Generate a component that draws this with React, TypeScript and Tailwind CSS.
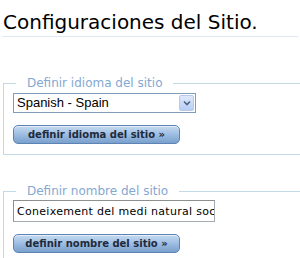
export default function App() {
  return (
    <div className="h-[258px] w-[300px] overflow-hidden bg-white font-['DejaVu_Sans',sans-serif]">
      <h1 className="mx-[2px] mt-[10px] border-b border-[#dfe7f0] pl-[1px] pb-[2px] text-[20px] leading-[24px] text-black">
        Configuraciones del Sitio.
      </h1>

      <fieldset className="ml-[3px] mt-[39px] w-[330px] border border-[#c3d9e6] pb-[10px] pl-[9px]">
        <legend className="ml-[3px] px-[11px] text-[12px] leading-[14px] text-[#84a8d2]">
          Definir idioma del sitio
        </legend>
        <SelectBox value="Spanish - Spain" />
        <Button label="definir idioma del sitio »" />
      </fieldset>

      <fieldset className="ml-[3px] mt-[29px] w-[330px] border border-[#c3d9e6] pb-[10px] pl-[9px]">
        <legend className="ml-[3px] px-[11px] text-[12px] leading-[14px] text-[#84a8d2]">
          Definir nombre del sitio
        </legend>
        <input
          type="text"
          readOnly
          value="Coneixement del medi natural sociocultural"
          className="mt-[2px] block h-[22px] w-[202px] border border-[#a5acb2] border-t-[#8e8f8f] border-l-[#8e8f8f] bg-white pl-[3px] text-[11px] leading-[20px] tracking-[0.3px] text-black outline-none"
        />
        <Button label="definir nombre del sitio »" />
      </fieldset>
    </div>
  );
}

function SelectBox({ value }: { value: string }) {
  return (
    <div className="mt-[3px] flex h-[20px] w-[183px] items-center border border-[#7f9db9] bg-white">
      <span className="flex-1 pl-[3px] font-['Liberation_Sans',sans-serif] text-[13px] leading-[18px] text-black">
        {value}
      </span>
      <span className="mr-[1px] flex h-[16px] w-[15px] items-center justify-center rounded-[2px] border border-[#b5c9ec] bg-gradient-to-b from-[#dfe9fb] to-[#b7cdf3]">
        <svg width="8" height="6" viewBox="0 0 8 6" aria-hidden="true">
          <path d="M1 1.5L4 4.5L7 1.5" fill="none" stroke="#4d6185" strokeWidth="1.6" />
        </svg>
      </span>
    </div>
  );
}

function Button({ label }: { label: string }) {
  return (
    <button
      type="button"
      className="mt-[12px] block h-[19px] w-[167px] rounded-[5px] border border-[#5b83b3] bg-gradient-to-b from-[#c6daf0] via-[#9dbde2] to-[#7aa0cc] text-center text-[10px] font-bold leading-[16px] text-[#1f2a3a] shadow-[inset_0_1px_0_#e4eefa]"
    >
      {label}
    </button>
  );
}
